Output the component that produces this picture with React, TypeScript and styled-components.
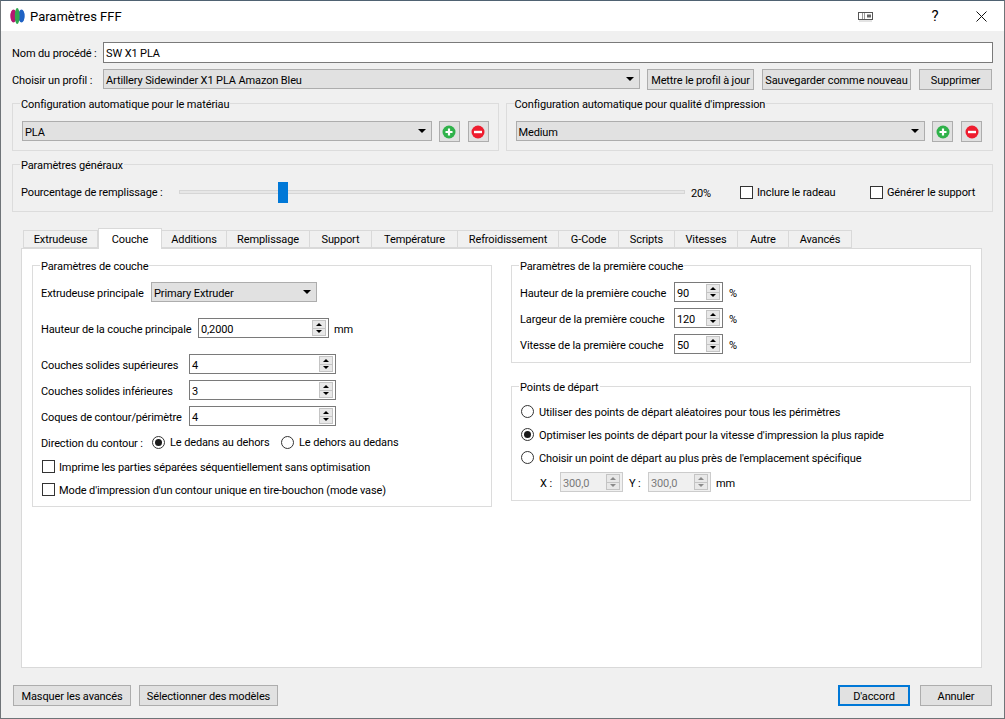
import React from 'react'
import styled, { createGlobalStyle } from 'styled-components'

const GlobalStyle = createGlobalStyle`
    html, body {
        margin: 0;
        padding: 0;
        background: #f0f0f0;
    }
    * {
        box-sizing: border-box;
    }
`

const Window = styled.div`
    width: 1005px;
    height: 719px;
    display: flex;
    flex-direction: column;
    background: #f0f0f0;
    border: 1px solid #6f7478;
    border-top-color: #4f6272;
    font-family: Roboto, sans-serif;
    font-size: 11px;
    letter-spacing: -0.12px;
    color: #000;
    overflow: hidden;
`

const TitleBar = styled.div`
    height: 30px;
    flex: none;
    display: flex;
    align-items: center;
    background: #fff;
    padding-left: 9px;
    font-size: 13px;
    letter-spacing: 0;
`

const TitleText = styled.span`
    margin-left: 5px;
    flex: 1;
`

const TitleButton = styled.div<{ $w: number }>`
    width: ${p => p.$w}px;
    height: 30px;
    display: flex;
    align-items: center;
    justify-content: center;
    font-size: 15px;
`

const Content = styled.div`
    flex: 1;
    display: flex;
    flex-direction: column;
    padding: 11px;
`

const Row = styled.div<{ $gap?: number; $mt?: number; $ml?: number; $h?: number; $pr?: number }>`
    display: flex;
    align-items: center;
    gap: ${p => p.$gap ?? 0}px;
    margin-top: ${p => p.$mt ?? 0}px;
    margin-left: ${p => p.$ml ?? 0}px;
    padding-right: ${p => p.$pr ?? 0}px;
    height: ${p => (p.$h ? `${p.$h}px` : 'auto')};
    flex: none;
`

const FieldLabel = styled.span<{ $w?: number; $pt?: number }>`
    width: ${p => (p.$w ? `${p.$w}px` : 'auto')};
    padding-top: ${p => p.$pt ?? 2}px;
    flex: none;
    white-space: nowrap;
`

const LineEdit = styled.div`
    flex: 1;
    height: 21px;
    display: flex;
    align-items: center;
    padding: 1px 0 0 2px;
    background: #fff;
    border: 1px solid #7a7a7a;
`

const Combo = styled.div<{ $w?: number }>`
    width: ${p => (p.$w ? `${p.$w}px` : 'auto')};
    flex: ${p => (p.$w ? 'none' : 1)};
    align-self: flex-start;
    height: 20px;
    display: flex;
    align-items: center;
    justify-content: space-between;
    padding: 2px 5px 0 2px;
    background: #e1e1e1;
    border: 1px solid #adadad;
`

const ComboArrow = styled.span`
    width: 0;
    height: 0;
    margin-top: -2px;
    border-left: 4px solid transparent;
    border-right: 4px solid transparent;
    border-top: 4px solid #000;
`

const Button = styled.div<{ $w: number; $default?: boolean; $ml?: number }>`
    width: ${p => p.$w}px;
    height: 21px;
    flex: none;
    margin-left: ${p => p.$ml ?? 0}px;
    padding-top: 1px;
    display: flex;
    align-items: center;
    justify-content: center;
    white-space: nowrap;
    background: #e1e1e1;
    border: ${p => (p.$default ? '2px solid #0078d7' : '1px solid #adadad')};
`

const Group = styled.div`
    position: relative;
    border: 1px solid #dcdcdc;
`

const GroupTitle = styled.span`
    position: absolute;
    top: -7px;
    left: 7px;
    padding: 0 1px;
    line-height: 15px;
    background: var(--group-bg, #f0f0f0);
    white-space: nowrap;
`

const AutoRow = styled.div`
    display: flex;
    gap: 7px;
    margin-top: 13px;
`

const AutoGroup = styled(Group)<{ $pr: number }>`
    flex: 1;
    height: 48px;
    display: flex;
    align-items: flex-start;
    padding: 17px ${p => p.$pr}px 8px 9px;
    gap: 7px;
`

const GeneralGroup = styled(Group)`
    display: flex;
    align-items: center;
    margin-top: 13px;
    height: 48px;
    flex: none;
    padding: 8px 0 0 8px;
`

const SliderTrack = styled.div`
    position: relative;
    width: 506px;
    height: 4px;
    flex: none;
    background: #e7e7e7;
    border: 1px solid #d6d6d6;
`

const SliderHandle = styled.div`
    position: absolute;
    top: -9px;
    width: 10px;
    height: 21px;
    background: #0078d7;
`

const Percent = styled.span`
    margin-left: 6px;
    padding-top: 2px;
    width: 49px;
    flex: none;
`

const CheckItem = styled.div<{ $mt?: number; $ml?: number; $w?: number }>`
    display: flex;
    align-items: center;
    gap: 4px;
    height: 15px;
    white-space: nowrap;
    margin-top: ${p => p.$mt ?? 0}px;
    margin-left: ${p => p.$ml ?? 0}px;
    width: ${p => (p.$w ? `${p.$w}px` : 'auto')};
    flex: none;
`

const CheckBox = styled.span`
    width: 13px;
    height: 13px;
    flex: none;
    background: #fff;
    border: 1px solid #333;
`

const Caption = styled.span<{ $pt?: number }>`
    padding-top: ${p => p.$pt ?? 1}px;
`

const RadioItem = styled(CheckItem)`
    gap: 5px;
`

const RadioMark = styled.span<{ $on?: boolean }>`
    width: 13px;
    height: 13px;
    flex: none;
    display: flex;
    align-items: center;
    justify-content: center;
    background: #fff;
    border: 1px solid #333;
    border-radius: 50%;
    &::after {
        content: '';
        width: 7px;
        height: 7px;
        border-radius: 50%;
        background: ${p => (p.$on ? '#1a1a1a' : 'transparent')};
    }
`

const TabArea = styled.div`
    flex: none;
    display: flex;
    flex-direction: column;
    margin: 16px 0 0 9px;
    width: 961px;
`

const TabBar = styled.div`
    display: flex;
    height: 20px;
    padding-left: 2px;
    align-items: flex-end;
    flex: none;
`

const Tab = styled.div<{ $w: number; $active?: boolean }>`
    width: ${p => p.$w}px;
    height: ${p => (p.$active ? 21 : 18)}px;
    margin-bottom: ${p => (p.$active ? -1 : 0)}px;
    padding-top: ${p => (p.$active ? 0 : 1)}px;
    position: relative;
    z-index: ${p => (p.$active ? 1 : 0)};
    flex: none;
    display: flex;
    align-items: center;
    justify-content: center;
    background: ${p => (p.$active ? '#fff' : '#f0f0f0')};
    border: 1px solid #d9d9d9;
    border-left-width: ${p => (p.$active ? 1 : 0)}px;
    border-bottom-width: ${p => (p.$active ? 0 : 1)}px;
    &:first-child {
        border-left-width: 1px;
    }
`

const Pane = styled.div`
    --group-bg: #fff;
    height: 420px;
    flex: none;
    background: #fff;
    border: 1px solid #d9d9d9;
    padding: 16px 10px 0;
    display: grid;
    grid-template-columns: 460px 460px;
    column-gap: 19px;
    align-items: start;
`

const Column = styled.div`
    display: flex;
    flex-direction: column;
    gap: 23px;
`

const PanelGroup = styled(Group)<{ $pt?: number; $pb?: number }>`
    display: flex;
    flex-direction: column;
    padding: ${p => p.$pt ?? 16}px 8px ${p => p.$pb ?? 8}px 8px;
`

const SpinBox = styled.div<{ $w: number; $off?: boolean }>`
    width: ${p => p.$w}px;
    height: 20px;
    flex: none;
    display: flex;
    align-items: center;
    justify-content: space-between;
    padding: 1px 2px;
    background: ${p => (p.$off ? '#f0f0f0' : '#fff')};
    border: 1px solid ${p => (p.$off ? '#cccccc' : '#7a7a7a')};
    color: ${p => (p.$off ? '#7a7a7a' : '#000')};
`

const SpinButtons = styled.div`
    width: 14px;
    height: 16px;
    display: flex;
    flex-direction: column;
    flex: none;
    background: #e8e8e8;
    border: 1px solid #c4c4c4;
`

const SpinStep = styled.div<{ $up?: boolean; $off?: boolean }>`
    flex: 1;
    display: flex;
    align-items: center;
    justify-content: center;
    border-bottom: ${p => (p.$up ? '1px solid #c4c4c4' : 'none')};
    &::after {
        content: '';
        width: 0;
        height: 0;
        border-left: 3px solid transparent;
        border-right: 3px solid transparent;
        border-${p => (p.$up ? 'bottom' : 'top')}: 3px solid ${p => (p.$off ? '#8a8a8a' : '#000')};
    }
`

const Unit = styled.span<{ $ml?: number }>`
    margin-left: ${p => p.$ml ?? 5}px;
    padding-top: 2px;
`

const CoordLabel = styled.span<{ $w: number; $pl: number }>`
    width: ${p => p.$w}px;
    padding: 2px 0 0 ${p => p.$pl}px;
    flex: none;
`

const Footer = styled.div`
    display: flex;
    gap: 8px;
    align-items: center;
    margin: 17px 0 0 1px;
    padding-right: 1px;
`

const FooterSpacer = styled.div`
    flex: 1;
`

const Spin = ({ w, value, off }: { w: number; value: string; off?: boolean }) => (
    <SpinBox $w={w} $off={off}>
        <Caption $pt={2}>{value}</Caption>
        <SpinButtons>
            <SpinStep $up $off={off} />
            <SpinStep $off={off} />
        </SpinButtons>
    </SpinBox>
)

const AddIcon = () => (
    <svg width="14" height="14" viewBox="0 0 14 14">
        <circle cx="7" cy="7" r="6.5" fill="#2fb24a" />
        <path d="M7 3.5v7M3.5 7h7" stroke="#fff" strokeWidth="2.2" />
    </svg>
)

const RemoveIcon = () => (
    <svg width="14" height="14" viewBox="0 0 14 14">
        <circle cx="7" cy="7" r="6.5" fill="#ee1c2e" />
        <path d="M3 7h8" stroke="#fff" strokeWidth="2.4" />
    </svg>
)

const AppLogo = () => (
    <svg width="15" height="16" viewBox="0 0 15 16">
        <ellipse cx="3.5" cy="8" rx="3.2" ry="6.5" fill="#b3176f" />
        <ellipse cx="11.5" cy="8" rx="3.2" ry="6.5" fill="#1f62c4" />
        <ellipse cx="7.2" cy="8" rx="2.4" ry="8" fill="#2fa84f" />
    </svg>
)

const DockIcon = () => (
    <svg width="16" height="11" viewBox="0 0 16 11">
        <rect x="0.5" y="1.5" width="14" height="7" fill="#fff" stroke="#555" />
        <path d="M4.5 2v6M6.5 2v6" stroke="#999" />
        <rect x="9" y="3.5" width="4" height="3" fill="#666" />
        <path d="M1 10h13" stroke="#c8c8c8" />
    </svg>
)

const CloseIcon = () => (
    <svg width="11" height="11" viewBox="0 0 11 11">
        <path d="M0.5 0.5l10 10M10.5 0.5l-10 10" stroke="#111" fill="none" />
    </svg>
)

const tabs = [
    { name: 'Extrudeuse', w: 75 },
    { name: 'Couche', w: 64, active: true },
    { name: 'Additions', w: 65 },
    { name: 'Remplissage', w: 83 },
    { name: 'Support', w: 62 },
    { name: 'Température', w: 86 },
    { name: 'Refroidissement', w: 101 },
    { name: 'G-Code', w: 60 },
    { name: 'Scripts', w: 56 },
    { name: 'Vitesses', w: 63 },
    { name: 'Autre', w: 51 },
    { name: 'Avancés', w: 63 },
]

const AutoConfig = ({ title, value, pr }: { title: string; value: string; pr: number }) => (
    <AutoGroup $pr={pr}>
        <GroupTitle>{title}</GroupTitle>
        <Combo>{value}<ComboArrow /></Combo>
        <Row $gap={8}>
            <Button $w={21}><AddIcon /></Button>
            <Button $w={21}><RemoveIcon /></Button>
        </Row>
    </AutoGroup>
)

const App = () => (
    <>
        <GlobalStyle />
        <Window>
            <TitleBar>
                <AppLogo />
                <TitleText>Paramètres FFF</TitleText>
                <TitleButton $w={93}><DockIcon /></TitleButton>
                <TitleButton $w={46}>?</TitleButton>
                <TitleButton $w={46}><CloseIcon /></TitleButton>
            </TitleBar>
            <Content>
                <Row>
                    <FieldLabel $w={91} $pt={1}>Nom du procédé :</FieldLabel>
                    <LineEdit>SW X1 PLA</LineEdit>
                </Row>
                <Row $mt={6}>
                    <FieldLabel $w={91} $pt={1}>Choisir un profil :</FieldLabel>
                    <Combo>
                        Artillery Sidewinder X1 PLA Amazon Bleu
                        <ComboArrow />
                    </Combo>
                    <Row $gap={8} $ml={7} $pr={1}>
                        <Button $w={107}>Mettre le profil à jour</Button>
                        <Button $w={149}>Sauvegarder comme nouveau</Button>
                        <Button $w={73}>Supprimer</Button>
                    </Row>
                </Row>
                <AutoRow>
                    <AutoConfig title="Configuration automatique pour le matériau" value="PLA" pr={9} />
                    <AutoConfig title="Configuration automatique pour qualité d'impression" value="Medium" pr={10} />
                </AutoRow>
                <GeneralGroup>
                    <GroupTitle>Paramètres généraux</GroupTitle>
                    <FieldLabel $w={158} $pt={1}>Pourcentage de remplissage :</FieldLabel>
                    <SliderTrack>
                        <SliderHandle style={{ left: 98 }} />
                    </SliderTrack>
                    <Percent>20%</Percent>
                    <CheckItem $w={130}><CheckBox />Inclure le radeau</CheckItem>
                    <CheckItem><CheckBox />Générer le support</CheckItem>
                </GeneralGroup>
                <TabArea>
                    <TabBar>
                        {tabs.map(t => (
                            <Tab key={t.name} $w={t.w} $active={t.active}>{t.name}</Tab>
                        ))}
                    </TabBar>
                    <Pane>
                        <Column>
                            <PanelGroup $pb={9}>
                                <GroupTitle>Paramètres de couche</GroupTitle>
                                <Row>
                                    <FieldLabel $w={110}>Extrudeuse principale</FieldLabel>
                                    <Combo $w={166}>Primary Extruder<ComboArrow /></Combo>
                                </Row>
                                <Row $mt={16}>
                                    <FieldLabel $w={157}>Hauteur de la couche principale</FieldLabel>
                                    <Spin w={131} value="0,2000" />
                                    <Unit>mm</Unit>
                                </Row>
                                <Row $mt={16}>
                                    <FieldLabel $w={148}>Couches solides supérieures</FieldLabel>
                                    <Spin w={147} value="4" />
                                </Row>
                                <Row $mt={6}>
                                    <FieldLabel $w={148}>Couches solides inférieures</FieldLabel>
                                    <Spin w={147} value="3" />
                                </Row>
                                <Row $mt={6}>
                                    <FieldLabel $w={148}>Coques de contour/périmètre</FieldLabel>
                                    <Spin w={147} value="4" />
                                </Row>
                                <Row $mt={6} $h={20}>
                                    <FieldLabel $w={111}>Direction du contour :</FieldLabel>
                                    <RadioItem $w={129}><RadioMark $on />Le dedans au dehors</RadioItem>
                                    <RadioItem><RadioMark />Le dehors au dedans</RadioItem>
                                </Row>
                                <CheckItem $mt={7} $ml={1}><CheckBox /><Caption>Imprime les parties séparées séquentiellement sans optimisation</Caption></CheckItem>
                                <CheckItem $mt={8} $ml={1}><CheckBox /><Caption>Mode d'impression d'un contour unique en tire-bouchon (mode vase)</Caption></CheckItem>
                            </PanelGroup>
                        </Column>
                        <Column>
                            <PanelGroup>
                                <GroupTitle>Paramètres de la première couche</GroupTitle>
                                <Row>
                                    <FieldLabel $w={154}>Hauteur de la première couche</FieldLabel>
                                    <Spin w={49} value="90" />
                                    <Unit $ml={6}>%</Unit>
                                </Row>
                                <Row $mt={6}>
                                    <FieldLabel $w={154}>Largeur de la première couche</FieldLabel>
                                    <Spin w={49} value="120" />
                                    <Unit $ml={6}>%</Unit>
                                </Row>
                                <Row $mt={6}>
                                    <FieldLabel $w={154}>Vitesse de la première couche</FieldLabel>
                                    <Spin w={49} value="50" />
                                    <Unit $ml={6}>%</Unit>
                                </Row>
                            </PanelGroup>
                            <PanelGroup $pt={17}>
                                <GroupTitle>Points de départ</GroupTitle>
                                <RadioItem $ml={1}><RadioMark /><Caption>Utiliser des points de départ aléatoires pour tous les périmètres</Caption></RadioItem>
                                <RadioItem $mt={8} $ml={1}><RadioMark $on /><Caption>Optimiser les points de départ pour la vitesse d'impression la plus rapide</Caption></RadioItem>
                                <RadioItem $mt={8} $ml={1}><RadioMark /><Caption>Choisir un point de départ au plus près de l'emplacement spécifique</Caption></RadioItem>
                                <Row $mt={7}>
                                    <CoordLabel $w={40} $pl={20}>X :</CoordLabel>
                                    <Spin w={63} value="300,0" off />
                                    <CoordLabel $w={25} $pl={6}>Y :</CoordLabel>
                                    <Spin w={63} value="300,0" off />
                                    <Unit>mm</Unit>
                                </Row>
                            </PanelGroup>
                        </Column>
                    </Pane>
                </TabArea>
                <Footer>
                    <Button $w={118}>Masquer les avancés</Button>
                    <Button $w={139}>Sélectionner des modèles</Button>
                    <FooterSpacer />
                    <Button $w={72} $default>D'accord</Button>
                    <Button $w={72} $ml={2}>Annuler</Button>
                </Footer>
            </Content>
        </Window>
    </>
)

export default App
